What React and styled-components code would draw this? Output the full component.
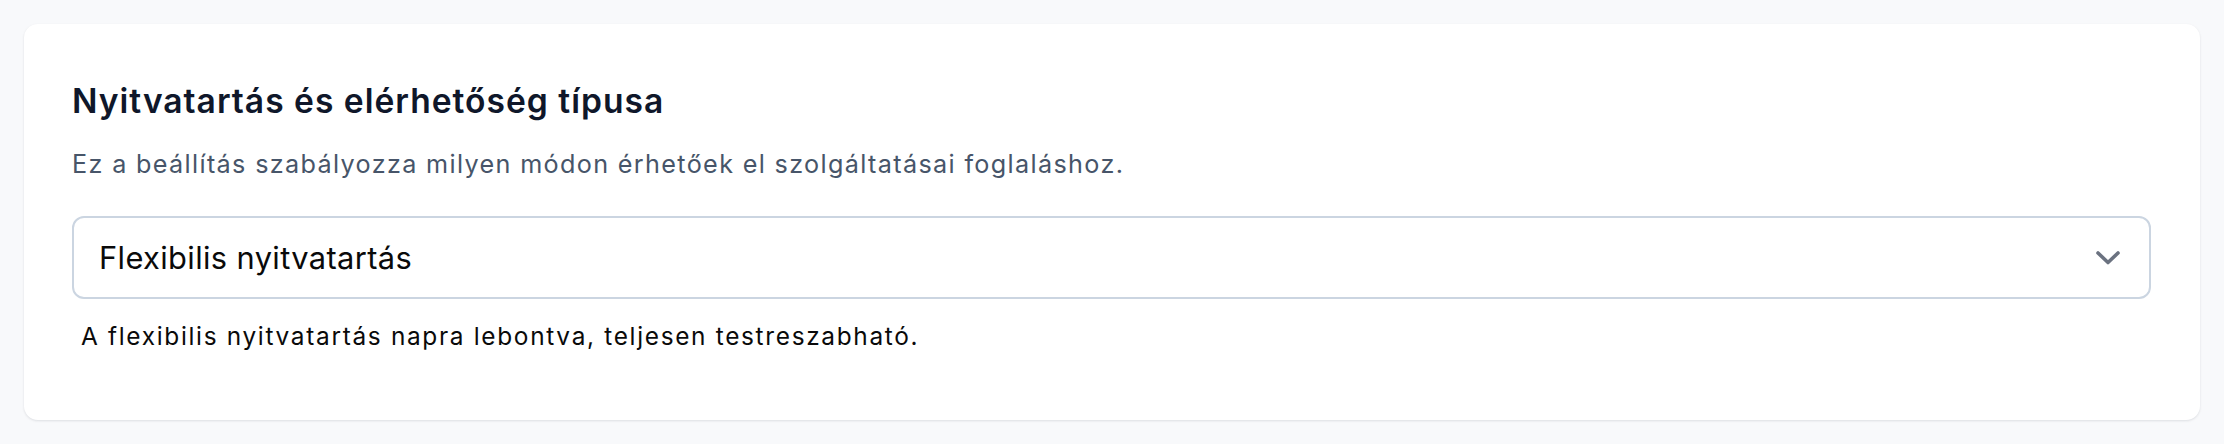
import React, { useState } from 'react';
import styled, { createGlobalStyle } from 'styled-components';

const GlobalStyle = createGlobalStyle`
  html, body {
    margin: 0;
    padding: 0;
    background: #f8f9fb;
    font-family: Inter, "Noto Sans", "Liberation Sans", sans-serif;
  }
  * {
    box-sizing: border-box;
  }
`;

const options = [
  {
    value: 'flexible',
    label: 'Flexibilis nyitvatartás',
    help: 'A flexibilis nyitvatartás napra lebontva, teljesen testreszabható.',
  },
];

export default function App() {
  const [selected] = useState(options[0]);

  return (
    <>
      <GlobalStyle />
      <Page>
        <Card>
          <Title>Nyitvatartás és elérhetőség típusa</Title>
          <Subtitle>
            Ez a beállítás szabályozza milyen módon érhetőek el szolgáltatásai foglaláshoz.
          </Subtitle>
          <Select>
            <SelectValue>{selected.label}</SelectValue>
            <Chevron width="26" height="16" viewBox="0 0 26 16">
              <polyline
                points="3,3 13,12.5 23,3"
                fill="none"
                stroke="currentColor"
                strokeWidth="3.6"
                strokeLinecap="round"
                strokeLinejoin="round"
              />
            </Chevron>
          </Select>
          <HelpText>{selected.help}</HelpText>
        </Card>
      </Page>
    </>
  );
}

const Page = styled.div`
  padding: 24px;
  min-height: 444px;
`;

const Card = styled.div`
  background: #ffffff;
  border-radius: 14px;
  box-shadow: 0 1px 3px rgba(15, 23, 42, 0.08), 0 1px 2px rgba(15, 23, 42, 0.04);
  padding: 53px 49px 66px 48px;
  display: flex;
  flex-direction: column;
`;

const Title = styled.h2`
  margin: 0;
  font-size: 33.6px;
  line-height: 48px;
  font-weight: 600;
  color: #0f172a;
  letter-spacing: 1px;
`;

const Subtitle = styled.p`
  margin: 21px 0 0;
  font-size: 25.2px;
  line-height: 36px;
  color: #475569;
  letter-spacing: 1.34px;
`;

const Select = styled.div`
  margin-top: 34px;
  height: 83px;
  border: 2px solid #cbd5e1;
  border-radius: 12px;
  display: flex;
  align-items: center;
  justify-content: space-between;
  padding: 0 28px 0 25px;
  background: #ffffff;
  cursor: pointer;
`;

const SelectValue = styled.span`
  font-size: 30.8px;
  color: #0a0a0a;
  letter-spacing: 0.38px;
`;

const Chevron = styled.svg`
  color: #6b7280;
  flex-shrink: 0;
`;

const HelpText = styled.p`
  margin: 19px 0 0 9px;
  font-size: 24.4px;
  line-height: 36px;
  color: #0a0a0a;
  letter-spacing: 1.68px;
`;
